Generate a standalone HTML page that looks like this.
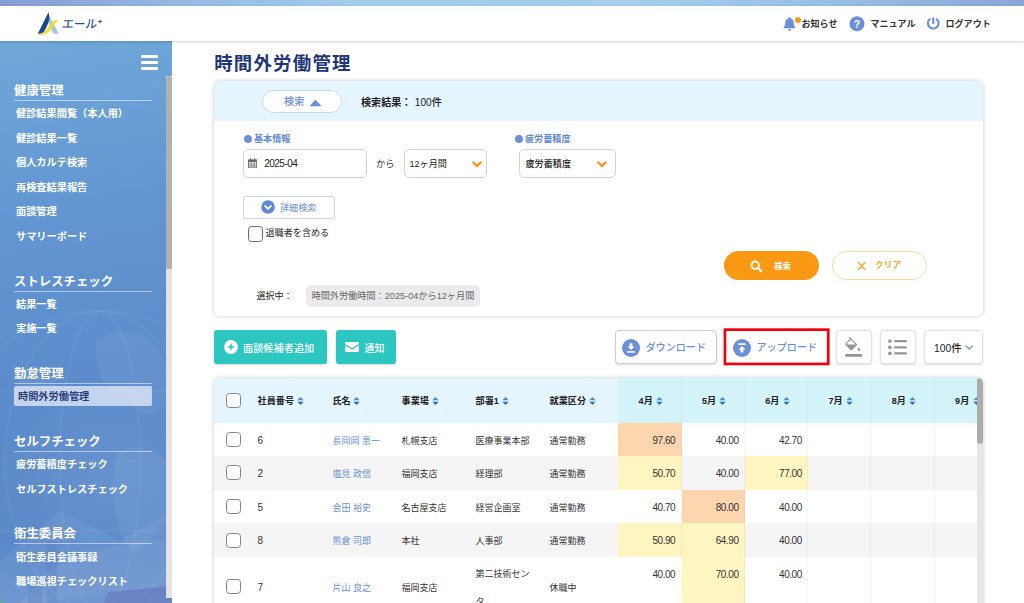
<!DOCTYPE html>
<html lang="ja">
<head>
<meta charset="utf-8">
<title>時間外労働管理</title>
<style>
*{box-sizing:border-box;margin:0;padding:0}
html,body{width:1024px;height:603px;overflow:hidden;background:#fff}
body{font-family:"Liberation Sans","Noto Sans CJK JP",sans-serif;font-size:9px;color:#333;position:relative}
.abs{position:absolute}
/* top strip + header */
#strip{left:0;top:0;width:1024px;height:5.6px;background:linear-gradient(90deg,#869cd5 0%,#96b6e1 16%,#a3cbea 34%,#a5cfeb 62%,#98bbe2 84%,#8aa5d8 100%)}
#header{left:0;top:6px;width:1024px;height:35px;background:#fff;box-shadow:0 1px 3px rgba(0,0,0,.18);z-index:5}
#logotext{left:61px;top:10.2px;font-size:11.6px;font-weight:500;color:#2b4f96;line-height:16px;white-space:nowrap;transform:skewX(-7deg);transform-origin:0 100%}
#logotext span{font-size:7.5px;font-weight:bold;position:relative;top:-4.5px;left:.5px}
.hitem{top:0;height:35px;line-height:36px;font-weight:bold;font-size:9.05px;color:#333;white-space:nowrap}
/* sidebar */
#side{left:0;top:41px;width:172px;height:562px;overflow:hidden;
 background:
  linear-gradient(180deg,rgba(255,255,255,0) 0,rgba(255,255,255,0) 520px,rgba(255,255,255,.04) 562px),
  radial-gradient(120px 110px at 105px 440px,rgba(255,255,255,.07),rgba(255,255,255,0) 100%),
  linear-gradient(170deg,#70a8d9 0%,#6296d2 30%,#5b8bcb 60%,#5987c8 100%)}
#side .bar{left:141px;width:17px;height:3px;background:#fff;border-radius:1px}
#strack{left:166px;top:35px;width:6px;height:522px;background:#e3e3e3}
#sthumb{left:166px;top:35px;width:6px;height:193px;background:#b1b1b1;border-radius:3px 3px 0 0}
.sh{left:14px;width:138px;height:19px;font-size:12.4px;font-weight:bold;color:#fff;line-height:19.4px;border-bottom:1px solid rgba(255,255,255,.52);white-space:nowrap}
.si{left:16px;margin-top:1px;height:20px;line-height:20px;font-size:10.2px;color:#fff;white-space:nowrap;font-weight:bold}
#sact{left:14px;top:345px;width:138px;height:19.5px;background:rgba(225,232,248,.78);border-radius:2px}
/* main */
#title{left:214.2px;top:50.7px;font-size:18.4px;font-weight:bold;color:#22347a;letter-spacing:1.25px;line-height:26px;white-space:nowrap}
#panel{left:214px;top:80.5px;width:769px;height:235.5px;background:#fff;border-radius:6px;box-shadow:0 0 4px rgba(0,0,0,.22);overflow:hidden}
#pband{left:0;top:0;width:769px;height:40.7px;background:#e5f5fe}
.inp{height:28.5px;border:1px solid #d3d3d3;border-radius:5px;background:#fff;line-height:28.8px;font-size:9.1px;color:#222;white-space:nowrap}
.lab{font-size:9.1px;font-weight:bold;color:#5f87d2;line-height:12px;white-space:nowrap}
.dot{width:8px;height:8px;border-radius:50%;background:#6b8fd8}
/* table */
#tbl{left:214px;top:377.5px;width:769px;height:240px;background:#fff;border-radius:5px 5px 0 0;box-shadow:0 0 4px rgba(0,0,0,.22);overflow:hidden}
.th{top:0;height:45px;line-height:47.6px;font-weight:bold;font-size:9.1px;color:#222;white-space:nowrap}
.row{left:0;width:763px}
.c{position:absolute;white-space:nowrap;font-size:9px;color:#333}
.cb{position:absolute;width:15px;height:15px;border:1.3px solid #858585;border-radius:3.5px;background:#fff}
.lnk{color:#6c8fd6}
.m{position:absolute;top:0;width:63.3px;border-right:1px solid rgba(0,0,0,.038);text-align:right;padding-right:5.4px;font-size:10px;letter-spacing:-.45px;color:#333}
</style>
</head>
<body>
<div id="strip" class="abs"></div>
<div id="header" class="abs">
  <svg class="abs" style="left:37px;top:6px" width="23" height="24" viewBox="0 0 23 24">
    <path d="M12.1 3.2 L21.9 21.7 L16.4 21.7 L11.2 10Z" fill="#a3c6e6"/>
    <path d="M11.6 0.1 C12.1 3.5 12.4 6 12 8.2 C10.5 13.5 8 18.5 5.8 21.6 L0.8 21.7Z" fill="#1c478d"/>
    <path d="M1.2 22.5 C6 23.8 10.8 22.2 14.2 17.6 C16.6 14.2 18.2 10.6 21.3 8.2 C17.4 7.3 14.6 9.8 12.4 13.6 C10 17.6 7 20.9 1.200 22.500Z" fill="#f0dc3c"/>
  </svg>
  <div id="logotext" class="abs">エール<span>+</span></div>
  <!-- bell -->
  <svg class="abs" style="left:783px;top:10.700px" width="13" height="15" viewBox="0 0 13 15">
    <path d="M6.5 0.3c.7 0 1.1.5 1.1 1.1 2 .5 3.1 2.2 3.1 4.4 0 2.6.7 3.7 1.6 4.6v.9H.6v-.9c.9-.9 1.6-2 1.6-4.6 0-2.200 1.100-3.900 3.100-4.400 0-.6.5-1.100 1.200-1.100z" fill="#6b8fd8"/>
    <path d="M4.900 12.300h3.200a1.600 1.600 0 0 1-3.200 0z" fill="#6b8fd8"/>
  </svg>
  <div class="abs" style="left:795px;top:11px;width:6.4px;height:6.4px;border-radius:50%;background:#f7991c"></div>
  <div class="abs hitem" style="left:801.5px">お知らせ</div>
  <svg class="abs" style="left:849px;top:10px" width="16" height="16" viewBox="0 0 16 16">
    <circle cx="8" cy="7.700" r="7.500" fill="#6b8fd8"/>
    <text x="8" y="11.600" text-anchor="middle" font-family="Liberation Sans, sans-serif" font-weight="bold" font-size="10.500" fill="#fff">?</text>
  </svg>
  <div class="abs hitem" style="left:870.5px">マニュアル</div>
  <svg class="abs" style="left:926px;top:10px" width="15" height="16" viewBox="0 0 15 16">
    <path d="M3.700 3.300a5.300 5.300 0 1 0 7.100 0" fill="none" stroke="#6b8fd8" stroke-width="2.100" stroke-linecap="round"/>
    <line x1="7.250" y1="2.200" x2="7.250" y2="7.200" stroke="#6b8fd8" stroke-width="2.100" stroke-linecap="round"/>
  </svg>
  <div class="abs hitem" style="left:945.5px">ログアウト</div>
</div>

<div id="side" class="abs">
  <svg class="abs" style="left:0;top:0" width="172" height="562" viewBox="0 0 172 562">
    <defs>
      <radialGradient id="gg" cx="-2" cy="565" r="11" gradientUnits="userSpaceOnUse"><stop offset="0" stop-color="#5cb36c" stop-opacity=".9"/><stop offset=".6" stop-color="#5aa98a" stop-opacity=".45"/><stop offset="1" stop-color="#5aa98a" stop-opacity="0"/></radialGradient>
      <linearGradient id="cb" x1="0" y1="500" x2="0" y2="562" gradientUnits="userSpaceOnUse"><stop offset="0" stop-color="#fff" stop-opacity="0"/><stop offset="1" stop-color="#fff" stop-opacity=".05"/></linearGradient>
    </defs>
    <g fill="none" stroke="#fff" stroke-opacity=".04" stroke-width="2.5">
      <circle cx="100" cy="420" r="150"/>
      <ellipse cx="100" cy="420" rx="95" ry="150"/>
      <ellipse cx="100" cy="420" rx="40" ry="150"/>
      <path d="M-50 420 H250 M-30 350 H230 M-30 490 H230"/>
    </g>
    <g fill="#fff" fill-opacity=".06">
      <path d="M96 300 q22 -14 46 -6 q18 10 24 30 l0 40 q-14 14 -30 6 q-10 -18 -26 -22 q-16 -14 -14 -48z"/>
      <path d="M118 410 q20 -8 40 2 l8 8 v60 q-14 18 -30 30 q-16 -8 -18 -30 q-10 -30 0 -70z"/>
      <path d="M20 330 q18 -10 34 0 q6 20 -8 34 q-18 4 -26 -10z"/>
      <path d="M0 520 L60 470 L120 500 L172 470 V562 H0Z"/>
      <path d="M50 528 Q110 500 172 498 V546 Q120 548 40 562 H20Z"/>
    </g>
    <rect x="0" y="500" width="172" height="62" fill="url(#cb)"/>
    <g fill="#3f64a8" fill-opacity=".16"><rect x="47" y="500" width="10" height="62"/><rect x="28" y="540" width="14" height="22"/></g>
    <path d="M108 551 Q140 549 172 544 V562 H104Z" fill="#5c55a8" fill-opacity=".28"/>
    <rect x="0" y="530" width="30" height="32" fill="url(#gg)"/>
  </svg>
    <div class="abs bar" style="top:14px"></div>
  <div class="abs bar" style="top:20px"></div>
  <div class="abs bar" style="top:26px"></div>
  <div id="strack" class="abs"></div>
  <div id="sthumb" class="abs"></div>

  <div class="abs sh" style="top:41px">健康管理</div>
  <div class="abs si" style="top:62px">健診結果閲覧（本人用）</div>
  <div class="abs si" style="top:86.600px">健診結果一覧</div>
  <div class="abs si" style="top:111.200px">個人カルテ検索</div>
  <div class="abs si" style="top:135.800px">再検査結果報告</div>
  <div class="abs si" style="top:160.400px">面談管理</div>
  <div class="abs si" style="top:185px">サマリーボード</div>

  <div class="abs sh" style="top:232px">ストレスチェック</div>
  <div class="abs si" style="top:253px">結果一覧</div>
  <div class="abs si" style="top:277px">実施一覧</div>

  <div class="abs sh" style="top:324px">勤怠管理</div>
  <div id="sact" class="abs"></div>
  <div class="abs si" style="top:345px;left:18px;color:#2b3f7a">時間外労働管理</div>

  <div class="abs sh" style="top:392px">セルフチェック</div>
  <div class="abs si" style="top:413px">疲労蓄積度チェック</div>
  <div class="abs si" style="top:437.500px">セルフストレスチェック</div>

  <div class="abs sh" style="top:484px">衛生委員会</div>
  <div class="abs si" style="top:505.500px">衛生委員会議事録</div>
  <div class="abs si" style="top:530px">職場巡視チェックリスト</div>
</div>

<div id="title" class="abs">時間外労働管理</div>

<div id="panel" class="abs">
  <div id="pband" class="abs"></div>
  <!-- search toggle pill -->
  <div class="abs" style="left:48px;top:9.500px;width:80px;height:23px;border:1px solid #cbd7f2;border-radius:12px;background:#fff"></div>
  <div class="abs" style="left:70px;top:9.500px;height:23px;line-height:24.400px;font-size:10.200px;font-weight:500;color:#6c8fd6">検索</div>
  <svg class="abs" style="left:94.500px;top:18px" width="13" height="8" viewBox="0 0 13 8"><path d="M6.500 .8 L12 6.600 Q12.300 7.200 11.500 7.200 L1.500 7.200 Q.7 7.200 1 6.600Z" fill="#6b8fd8"/></svg>
  <div class="abs" style="left:147px;top:9.500px;height:23px;line-height:26.200px;font-size:10.100px;font-weight:bold;color:#222;white-space:nowrap">検索結果：</div>
  <div class="abs" style="left:200.800px;top:9.500px;height:23px;line-height:26.200px;font-size:10.100px;font-weight:500;color:#222;white-space:nowrap">100件</div>

  <!-- 基本情報 -->
  <div class="abs dot" style="left:29.500px;top:54px"></div>
  <div class="abs lab" style="left:40px;top:52.500px">基本情報</div>
  <div class="abs inp" style="left:28.500px;top:68.500px;width:124px;padding-left:20.700px;font-size:10px;letter-spacing:-.5px">2025-04</div>
  <svg class="abs" style="left:33.500px;top:77.200px" width="9.300" height="10.500" viewBox="0 0 10 11" preserveAspectRatio="none">
    <rect x=".6" y="2" width="8.800" height="8.400" fill="none" stroke="#666" stroke-width="1"/>
    <rect x=".6" y="2" width="8.800" height="2.200" fill="#666"/>
    <line x1="2.800" y1=".3" x2="2.800" y2="2.500" stroke="#666" stroke-width="1.200"/>
    <line x1="7.200" y1=".3" x2="7.200" y2="2.500" stroke="#666" stroke-width="1.200"/>
    <line x1="3.500" y1="4" x2="3.500" y2="10" stroke="#666" stroke-width=".8"/>
    <line x1="6.500" y1="4" x2="6.500" y2="10" stroke="#666" stroke-width=".8"/>
    <line x1=".6" y1="6.300" x2="9.400" y2="6.300" stroke="#666" stroke-width=".8"/>
    <line x1=".6" y1="8.400" x2="9.400" y2="8.400" stroke="#666" stroke-width=".8"/>
  </svg>
  <div class="abs" style="left:162px;top:68.500px;height:28.500px;line-height:30.400px;font-size:9.300px;color:#333">から</div>
  <div class="abs inp" style="left:189.500px;top:68.500px;width:83.500px;padding-left:5px">12ヶ月間</div>
  <svg class="abs" style="left:258px;top:80.200px" width="10" height="7" viewBox="0 0 10 7"><path d="M1.300 1.400 L5 5.100 L8.700 1.400" fill="none" stroke="#f7991c" stroke-width="2.300" stroke-linecap="round" stroke-linejoin="round"/></svg>

  <!-- 疲労蓄積度 -->
  <div class="abs dot" style="left:300.500px;top:54px"></div>
  <div class="abs lab" style="left:311px;top:52.500px">疲労蓄積度</div>
  <div class="abs inp" style="left:304.500px;top:68.500px;width:97.500px;padding-left:6px;font-weight:500">疲労蓄積度</div>
  <svg class="abs" style="left:383px;top:80.200px" width="10" height="7" viewBox="0 0 10 7"><path d="M1.300 1.400 L5 5.100 L8.700 1.400" fill="none" stroke="#f7991c" stroke-width="2.300" stroke-linecap="round" stroke-linejoin="round"/></svg>

  <!-- 詳細検索 -->
  <div class="abs" style="left:28.500px;top:115px;width:92px;height:23px;border:1px solid #c9d6f2;border-radius:2px;background:#fff"></div>
  <svg class="abs" style="left:47px;top:119.500px" width="14" height="14" viewBox="0 0 14 14"><circle cx="7" cy="7" r="6.800" fill="#5f87d8"/><path d="M4 5.800 L7 8.800 L10 5.800" fill="none" stroke="#fff" stroke-width="1.700" stroke-linecap="round" stroke-linejoin="round"/></svg>
  <div class="abs" style="left:66px;top:115px;height:23px;line-height:24.500px;font-size:9.100px;color:#6c8fd6;white-space:nowrap">詳細検索</div>
  <div class="abs" style="left:33.500px;top:145.500px;width:15.500px;height:15.500px;border:1.500px solid #6a6a6a;border-radius:3.500px;background:#fff"></div>
  <div class="abs" style="left:51.500px;top:145.500px;height:15.500px;line-height:15px;font-size:9.100px;color:#222;white-space:nowrap">退職者を含める</div>

  <!-- buttons -->
  <div class="abs" style="left:510px;top:170.500px;width:95px;height:28.500px;border-radius:15px;background:#fa9a14"></div>
  <svg class="abs" style="left:536px;top:179.500px" width="13" height="13" viewBox="0 0 13 13"><circle cx="5.200" cy="5.200" r="3.700" fill="none" stroke="#fff" stroke-width="1.900"/><line x1="8" y1="8" x2="11.300" y2="11.300" stroke="#fff" stroke-width="2.100" stroke-linecap="round"/></svg>
  <div class="abs" style="left:560.300px;top:170.500px;height:28.500px;line-height:30.400px;font-size:8.300px;font-weight:bold;color:#fff">検索</div>
  <div class="abs" style="left:617.500px;top:170.500px;width:95.500px;height:28.500px;border-radius:15px;border:1px solid #fbd6a3;background:#fff"></div>
  <svg class="abs" style="left:642.500px;top:180.500px" width="10" height="10" viewBox="0 0 10 10"><path d="M1.300 1.600 L8.100 8.400 M8.100 1.600 L1.300 8.400" stroke="#f8a634" stroke-width="1.400" stroke-linecap="round"/></svg>
  <div class="abs" style="left:661px;top:170.500px;height:28.500px;line-height:29.600px;font-size:8.700px;font-weight:bold;color:#f8a634;white-space:nowrap">クリア</div>

  <!-- selected tag -->
  <div class="abs" style="left:42.500px;top:204px;height:23px;line-height:23px;font-size:9px;color:#222;white-space:nowrap">選択中：</div>
  <div class="abs" style="left:92px;top:204px;width:174px;height:22.500px;border-radius:5px;background:#ebebeb"></div>
  <div class="abs" style="left:97.500px;top:204px;height:22.500px;line-height:22.500px;font-size:9.170px;color:#666;white-space:nowrap">時間外労働時間：2025-04から12ヶ月間</div>
</div>

<!-- toolbar -->
<div class="abs" style="left:214px;top:330px;width:112.500px;height:34px;border-radius:3px;background:#2bc7c0;box-shadow:0 1px 2px rgba(0,0,0,.15)"></div>
<svg class="abs" style="left:223.500px;top:340px" width="14" height="14" viewBox="0 0 14 14"><circle cx="7" cy="7" r="6.900" fill="#fff"/><path d="M7 4.400V9.600M4.400 7H9.600" stroke="#2bc7c0" stroke-width="1.500" stroke-linecap="round"/></svg>
<div class="abs" style="left:243px;top:330px;height:34px;line-height:37.200px;font-size:10.200px;font-weight:500;color:#fff;white-space:nowrap">面談候補者追加</div>
<div class="abs" style="left:335.500px;top:330px;width:60.600px;height:34px;border-radius:3px;background:#2bc7c0;box-shadow:0 1px 2px rgba(0,0,0,.15)"></div>
<svg class="abs" style="left:345px;top:342px" width="14" height="10" viewBox="0 0 14 10"><path d="M0 1.200 Q0 0 1.200 0 H12.800 Q14 0 14 1.200 V1.800 L7 6.200 L0 1.800Z" fill="#fff"/><path d="M0 3.300 L7 7.700 L14 3.300 V8.800 Q14 10 12.800 10 H1.200 Q0 10 0 8.800Z" fill="#fff"/></svg>
<div class="abs" style="left:364.500px;top:330px;height:34px;line-height:37.200px;font-size:9.950px;font-weight:500;color:#fff;white-space:nowrap">通知</div>

<div class="abs" style="left:614.500px;top:329.500px;width:102px;height:34.500px;border-radius:4px;border:1px solid #c2cfec;background:#fff;box-shadow:0 1px 2px rgba(0,0,0,.14)"></div>
<svg class="abs" style="left:622px;top:338.500px" width="18" height="18" viewBox="0 0 18 18"><circle cx="9" cy="9" r="9" fill="#6b8fd8"/><path d="M7.600 4.300h2.800v3.200h2L9 11 5.600 7.500h2z" fill="#fff"/><rect x="5.200" y="12.100" width="7.600" height="1.600" fill="#fff"/></svg>
<div class="abs" style="left:645.500px;top:329.500px;height:34.500px;line-height:36.800px;font-size:10.100px;font-weight:500;color:#6b8fd8;white-space:nowrap">ダウンロード</div>

<svg class="abs" style="left:720px;top:325px" width="114" height="44" viewBox="0 0 114 44"><rect x="4.950" y="4.650" width="103.300" height="34.300" fill="#fff" stroke="#f2000c" stroke-width="2.700"/></svg>
<svg class="abs" style="left:733px;top:338.500px" width="18" height="18" viewBox="0 0 18 18"><circle cx="9" cy="9" r="9" fill="#6b8fd8"/><rect x="5.200" y="4.300" width="7.600" height="1.600" fill="#fff"/><path d="M9 6.900l3.400 3.500h-2v3.200H7.600v-3.200h-2z" fill="#fff"/></svg>
<div class="abs" style="left:756.500px;top:329.500px;height:34.500px;line-height:36.800px;font-size:10.100px;font-weight:500;color:#6b8fd8;white-space:nowrap">アップロード</div>

<div class="abs" style="left:836px;top:330px;width:35.500px;height:34px;border-radius:4px;border:1px solid #e2e2e2;background:#fff;box-shadow:0 1px 2px rgba(0,0,0,.14)"></div>
<svg class="abs" style="left:844px;top:336px" width="20" height="22" viewBox="0 0 20 22">
  <path d="M5.400 1.400 L12.600 8.600 L8 13.200 Q7.300 13.900 6.600 13.200 L2.200 8.800 Q1.500 8.100 2.200 7.400 L6.600 3" fill="none" stroke="#969696" stroke-width="1.300" stroke-linejoin="round" stroke-linecap="round"/>
  <path d="M2.300 8.600 H12.400 L8 13 Q7.300 13.700 6.600 13Z" fill="#969696"/>
  <path d="M14.800 11.200 Q16.100 13 16.100 13.700 A1.300 1.300 0 0 1 13.500 13.700 Q13.500 13 14.800 11.200Z" fill="#969696"/>
  <rect x="1.200" y="18.100" width="16.800" height="2.700" rx=".6" fill="#969696"/>
</svg>
<div class="abs" style="left:880px;top:330px;width:35.500px;height:34px;border-radius:4px;border:1px solid #e2e2e2;background:#fff;box-shadow:0 1px 2px rgba(0,0,0,.14)"></div>
<svg class="abs" style="left:888px;top:338px" width="20" height="18" viewBox="0 0 20 18">
  <g fill="#969696"><rect x=".3" y="1.600" width="3.200" height="3.200" rx=".6"/><rect x=".3" y="7.700" width="3.200" height="3.200" rx=".6"/><rect x=".3" y="13.800" width="3.200" height="3.200" rx=".6"/>
  <rect x="6" y="2.100" width="13" height="2.200" rx="1"/><rect x="6" y="8.200" width="13" height="2.200" rx="1"/><rect x="6" y="14.300" width="13" height="2.200" rx="1"/></g>
</svg>
<div class="abs" style="left:924px;top:330px;width:58.500px;height:34px;border-radius:4px;border:1px solid #e2e2e2;background:#fff;box-shadow:0 1px 2px rgba(0,0,0,.14)"></div>
<div class="abs" style="left:934px;top:330px;height:34px;line-height:37px;font-size:10.300px;font-weight:500;color:#222;white-space:nowrap">100件</div>
<svg class="abs" style="left:965px;top:344.800px" width="9" height="6" viewBox="0 0 9 6"><path d="M1 1 L4.200 4 L7.400 1" fill="none" stroke="#969696" stroke-width="1.500" stroke-linecap="round" stroke-linejoin="round"/></svg>

<!-- table -->
<div id="tbl" class="abs">
<div class="abs" style="left:0;top:0;width:404.3px;height:45.0px;background:#e4f5fd"></div>
<div class="abs" style="left:404.3px;top:0;width:364.7px;height:45.0px;background:#d4f4f9"></div>
<div class="cb" style="left:11.7px;top:15.500px"></div>
<div class="abs th" style="left:43.6px">社員番号</div>
<svg class="abs" style="left:82.7px;top:19.0px" width="7" height="8" viewBox="0 0 7 8"><path d="M3.5 .1 L6.700 3.200 H.3Z" fill="#4a8edb"/><path d="M3.500 7.900 L6.700 4.800 H.3Z" fill="#2d6cc0"/></svg>
<div class="abs th" style="left:118.5px">氏名</div>
<svg class="abs" style="left:139.4px;top:19.0px" width="7" height="8" viewBox="0 0 7 8"><path d="M3.5 .1 L6.700 3.200 H.3Z" fill="#4a8edb"/><path d="M3.500 7.900 L6.700 4.800 H.3Z" fill="#2d6cc0"/></svg>
<div class="abs th" style="left:187.6px">事業場</div>
<svg class="abs" style="left:217.6px;top:19.0px" width="7" height="8" viewBox="0 0 7 8"><path d="M3.5 .1 L6.700 3.200 H.3Z" fill="#4a8edb"/><path d="M3.500 7.900 L6.700 4.800 H.3Z" fill="#2d6cc0"/></svg>
<div class="abs th" style="left:261.6px">部署1</div>
<svg class="abs" style="left:287.8px;top:19.0px" width="7" height="8" viewBox="0 0 7 8"><path d="M3.5 .1 L6.700 3.200 H.3Z" fill="#4a8edb"/><path d="M3.500 7.900 L6.700 4.800 H.3Z" fill="#2d6cc0"/></svg>
<div class="abs th" style="left:335.6px">就業区分</div>
<svg class="abs" style="left:374.7px;top:19.0px" width="7" height="8" viewBox="0 0 7 8"><path d="M3.5 .1 L6.700 3.200 H.3Z" fill="#4a8edb"/><path d="M3.500 7.900 L6.700 4.800 H.3Z" fill="#2d6cc0"/></svg>
<div class="abs th" style="left:424.6px">4月</div>
<svg class="abs" style="left:442.0px;top:19.0px" width="7" height="8" viewBox="0 0 7 8"><path d="M3.5 .1 L6.700 3.200 H.3Z" fill="#4a8edb"/><path d="M3.500 7.900 L6.700 4.800 H.3Z" fill="#2d6cc0"/></svg>
<div class="abs" style="left:466.6px;top:0;width:1px;height:45.0px;background:#cdedf2"></div>
<div class="abs th" style="left:487.9px">5月</div>
<svg class="abs" style="left:505.3px;top:19.0px" width="7" height="8" viewBox="0 0 7 8"><path d="M3.5 .1 L6.700 3.200 H.3Z" fill="#4a8edb"/><path d="M3.500 7.900 L6.700 4.800 H.3Z" fill="#2d6cc0"/></svg>
<div class="abs" style="left:529.9px;top:0;width:1px;height:45.0px;background:#cdedf2"></div>
<div class="abs th" style="left:551.2px">6月</div>
<svg class="abs" style="left:568.6px;top:19.0px" width="7" height="8" viewBox="0 0 7 8"><path d="M3.5 .1 L6.700 3.200 H.3Z" fill="#4a8edb"/><path d="M3.500 7.900 L6.700 4.800 H.3Z" fill="#2d6cc0"/></svg>
<div class="abs" style="left:593.2px;top:0;width:1px;height:45.0px;background:#cdedf2"></div>
<div class="abs th" style="left:614.5px">7月</div>
<svg class="abs" style="left:631.9px;top:19.0px" width="7" height="8" viewBox="0 0 7 8"><path d="M3.5 .1 L6.700 3.200 H.3Z" fill="#4a8edb"/><path d="M3.500 7.900 L6.700 4.800 H.3Z" fill="#2d6cc0"/></svg>
<div class="abs" style="left:656.5px;top:0;width:1px;height:45.0px;background:#cdedf2"></div>
<div class="abs th" style="left:677.8px">8月</div>
<svg class="abs" style="left:695.2px;top:19.0px" width="7" height="8" viewBox="0 0 7 8"><path d="M3.5 .1 L6.700 3.200 H.3Z" fill="#4a8edb"/><path d="M3.500 7.900 L6.700 4.800 H.3Z" fill="#2d6cc0"/></svg>
<div class="abs" style="left:719.8px;top:0;width:1px;height:45.0px;background:#cdedf2"></div>
<div class="abs th" style="left:741.1px">9月</div>
<svg class="abs" style="left:758.5px;top:19.0px" width="7" height="8" viewBox="0 0 7 8"><path d="M3.5 .1 L6.700 3.200 H.3Z" fill="#4a8edb"/><path d="M3.500 7.900 L6.700 4.800 H.3Z" fill="#2d6cc0"/></svg>
<div class="abs row" style="top:45.0px;height:33.6px;background:#fff">
<div class="cb" style="left:11.7px;top:9.3px"></div>
<div class="c" style="left:43.6px;top:11.0px;height:14px;line-height:14px;font-size:10px">6</div>
<div class="c lnk" style="left:118.5px;top:11.0px;height:14px;line-height:14px">長岡岡 恵一</div>
<div class="c" style="left:187.6px;top:11.0px;height:14px;line-height:14px">札幌支店</div>
<div class="c" style="left:261.6px;top:11.0px;height:14px;line-height:14px">医療事業本部</div>
<div class="c" style="left:335.6px;top:11.0px;height:14px;line-height:14px">通常勤務</div>
<div class="m" style="left:404.3px;height:33.6px;line-height:36.0px;background:#fdd6b0;">97.60</div>
<div class="m" style="left:467.6px;height:33.6px;line-height:36.0px;">40.00</div>
<div class="m" style="left:530.9px;height:33.6px;line-height:36.0px;">42.70</div>
<div class="m" style="left:594.2px;height:33.6px;line-height:36.0px;"></div>
<div class="m" style="left:657.5px;height:33.6px;line-height:36.0px;"></div>
<div class="m" style="left:720.8px;height:33.6px;line-height:36.0px;"></div>
</div>
<div class="abs row" style="top:78.6px;height:33.6px;background:#f5f5f5">
<div class="cb" style="left:11.7px;top:9.3px"></div>
<div class="c" style="left:43.6px;top:11.0px;height:14px;line-height:14px;font-size:10px">2</div>
<div class="c lnk" style="left:118.5px;top:11.0px;height:14px;line-height:14px">塩見 政信</div>
<div class="c" style="left:187.6px;top:11.0px;height:14px;line-height:14px">福岡支店</div>
<div class="c" style="left:261.6px;top:11.0px;height:14px;line-height:14px">経理部</div>
<div class="c" style="left:335.6px;top:11.0px;height:14px;line-height:14px">通常勤務</div>
<div class="m" style="left:404.3px;height:33.6px;line-height:36.0px;background:#fef5c1;">50.70</div>
<div class="m" style="left:467.6px;height:33.6px;line-height:36.0px;">40.00</div>
<div class="m" style="left:530.9px;height:33.6px;line-height:36.0px;background:#fef5c1;">77.00</div>
<div class="m" style="left:594.2px;height:33.6px;line-height:36.0px;"></div>
<div class="m" style="left:657.5px;height:33.6px;line-height:36.0px;"></div>
<div class="m" style="left:720.8px;height:33.6px;line-height:36.0px;"></div>
</div>
<div class="abs row" style="top:112.2px;height:33.6px;background:#fff">
<div class="cb" style="left:11.7px;top:9.3px"></div>
<div class="c" style="left:43.6px;top:11.0px;height:14px;line-height:14px;font-size:10px">5</div>
<div class="c lnk" style="left:118.5px;top:11.0px;height:14px;line-height:14px">会田 裕史</div>
<div class="c" style="left:187.6px;top:11.0px;height:14px;line-height:14px">名古屋支店</div>
<div class="c" style="left:261.6px;top:11.0px;height:14px;line-height:14px">経営企画室</div>
<div class="c" style="left:335.6px;top:11.0px;height:14px;line-height:14px">通常勤務</div>
<div class="m" style="left:404.3px;height:33.6px;line-height:36.0px;">40.70</div>
<div class="m" style="left:467.6px;height:33.6px;line-height:36.0px;background:#fdd6b0;">80.00</div>
<div class="m" style="left:530.9px;height:33.6px;line-height:36.0px;">40.00</div>
<div class="m" style="left:594.2px;height:33.6px;line-height:36.0px;"></div>
<div class="m" style="left:657.5px;height:33.6px;line-height:36.0px;"></div>
<div class="m" style="left:720.8px;height:33.6px;line-height:36.0px;"></div>
</div>
<div class="abs row" style="top:145.8px;height:33.6px;background:#f5f5f5">
<div class="cb" style="left:11.7px;top:9.3px"></div>
<div class="c" style="left:43.6px;top:11.0px;height:14px;line-height:14px;font-size:10px">8</div>
<div class="c lnk" style="left:118.5px;top:11.0px;height:14px;line-height:14px">熊倉 司郎</div>
<div class="c" style="left:187.6px;top:11.0px;height:14px;line-height:14px">本社</div>
<div class="c" style="left:261.6px;top:11.0px;height:14px;line-height:14px">人事部</div>
<div class="c" style="left:335.6px;top:11.0px;height:14px;line-height:14px">通常勤務</div>
<div class="m" style="left:404.3px;height:33.6px;line-height:36.0px;background:#fef5c1;">50.90</div>
<div class="m" style="left:467.6px;height:33.6px;line-height:36.0px;background:#fef5c1;">64.90</div>
<div class="m" style="left:530.9px;height:33.6px;line-height:36.0px;">40.00</div>
<div class="m" style="left:594.2px;height:33.6px;line-height:36.0px;"></div>
<div class="m" style="left:657.5px;height:33.6px;line-height:36.0px;"></div>
<div class="m" style="left:720.8px;height:33.6px;line-height:36.0px;"></div>
</div>
<div class="abs row" style="top:179.4px;height:60.0px;background:#fff">
<div class="cb" style="left:11.7px;top:22.5px"></div>
<div class="c" style="left:43.6px;top:24.2px;height:14px;line-height:14px;font-size:10px">7</div>
<div class="c lnk" style="left:118.5px;top:24.2px;height:14px;line-height:14px">片山 良之</div>
<div class="c" style="left:187.6px;top:24.2px;height:14px;line-height:14px">福岡支店</div>
<div class="c" style="left:261.6px;top:9.9px;height:14px;line-height:14px">第二技術セン</div>
<div class="c" style="left:261.6px;top:38.5px;height:14px;line-height:14px">タ</div>
<div class="c" style="left:335.6px;top:24.2px;height:14px;line-height:14px">休職中</div>
<div class="m" style="left:404.3px;height:60.0px;line-height:36.0px;">40.00</div>
<div class="m" style="left:467.6px;height:60.0px;line-height:36.0px;background:#fef5c1;">70.00</div>
<div class="m" style="left:530.9px;height:60.0px;line-height:36.0px;">40.00</div>
<div class="m" style="left:594.2px;height:60.0px;line-height:36.0px;"></div>
<div class="m" style="left:657.5px;height:60.0px;line-height:36.0px;"></div>
<div class="m" style="left:720.8px;height:60.0px;line-height:36.0px;"></div>
</div>
<div class="abs" style="left:763px;top:0;width:6px;height:240px;background:#e6e6e6"></div>
<div class="abs" style="left:763px;top:0;width:6px;height:66px;background:#adadad;border-radius:3px"></div>
</div>
</body>
</html>
